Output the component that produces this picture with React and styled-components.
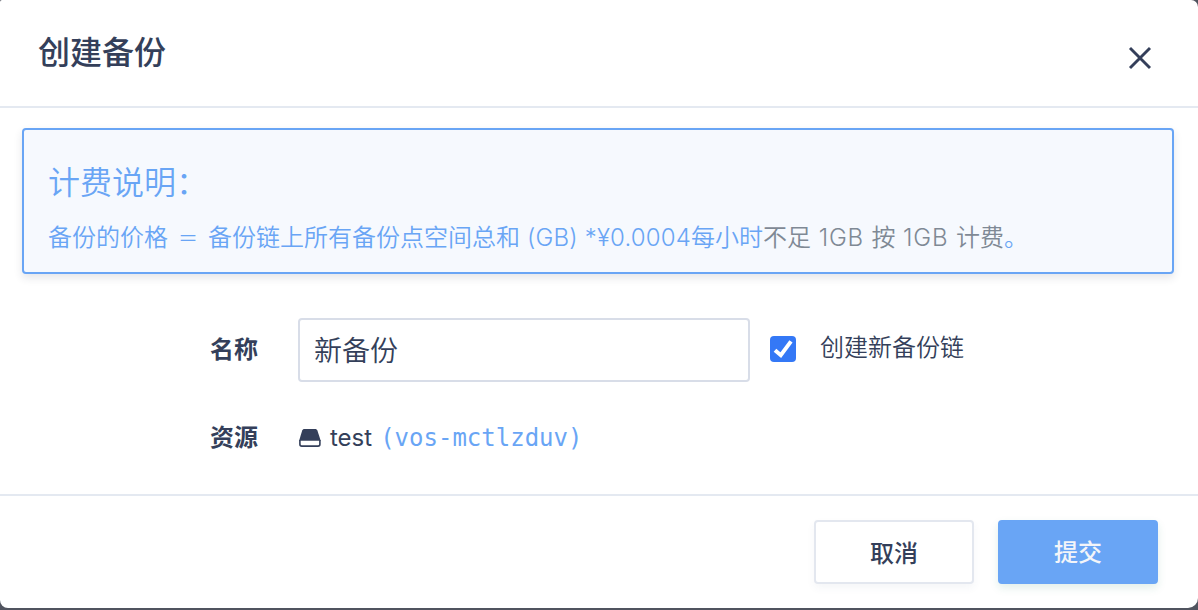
import React, { useState } from "react";
import styled, { createGlobalStyle } from "styled-components";

const GlobalStyle = createGlobalStyle`
  *, *::before, *::after { box-sizing: border-box; }
  body {
    margin: 0;
    background: #50545f;
    color: #343f5a;
    font-family: Inter, "Noto Sans CJK SC", sans-serif;
    font-size: 24px;
    overflow: hidden;
  }
  h2, h3, p { margin: 0; }
  button, input { font-family: inherit; }
`;

const Modal = styled.div`
  display: flex;
  flex-direction: column;
  width: 1198px;
  height: 608px;
  background: #fff;
  border-radius: 2px 7px 10px 8px;
  overflow: hidden;
`;

const Header = styled.header`
  display: flex;
  justify-content: space-between;
  height: 108px;
  padding: 29px 46px 0 38px;
  border-bottom: 2px solid #e4e9f1;
`;

const Title = styled.h2`
  font-size: 32px;
  line-height: 48px;
  font-weight: 500;
`;

const CloseButton = styled.button`
  width: 24px;
  height: 24px;
  margin-top: 17px;
  padding: 0;
  border: 0;
  background: none;
  color: #343f5a;
  svg { display: block; }
`;

const Body = styled.main`
  flex: 1;
  padding: 20px 24px 0 22px;
`;

const Notice = styled.section`
  height: 146px;
  padding: 29px 24px 0;
  border: 2px solid #69a5f5;
  border-radius: 4px;
  background: #f6f9fe;
  box-shadow: 0 4px 8px rgba(40, 50, 70, 0.12);
  color: #69a5f5;
  font-weight: 350;
`;

const NoticeTitle = styled.h3`
  font-size: 32px;
  line-height: 48px;
  font-weight: 350;
`;

const NoticeText = styled.p`
  margin-top: 13px;
  line-height: 36px;
  white-space: pre;
`;

const Equals = styled.span`
  display: inline-block;
  width: 40px;
  font-size: 20px;
  text-align: center;
`;

const Latin = styled.span`
  font-weight: 300;
  letter-spacing: ${(p) => p.$spacing}px;
`;

const Muted = styled.span`
  color: #7f8995;
`;

const Field = styled.div`
  display: flex;
  align-items: center;
  height: ${(p) => p.$height}px;
  margin-top: ${(p) => p.$gap}px;
  padding-left: 188px;
`;

const Label = styled.label`
  width: 88px;
  line-height: 36px;
  font-weight: 600;
`;

const TextInput = styled.input`
  width: 452px;
  height: 64px;
  padding: 0 14px 3px;
  border: 2px solid #d8dde8;
  border-radius: 4px;
  background: #fff;
  color: #343f5a;
  font-size: 28px;
  font-weight: 350;
  outline: 0;
`;

const Check = styled.label`
  display: flex;
  align-items: center;
  margin-left: 20px;
  padding-bottom: 2px;
  line-height: 26px;
  font-weight: 350;
`;

const CheckInput = styled.input`
  appearance: none;
  width: 0;
  height: 0;
  margin: 0;
`;

const CheckBox = styled.span`
  width: 26px;
  height: 26px;
  margin-right: 24px;
  border-radius: 4px;
  background: ${(p) => (p.$checked ? "#3478f6" : "#d8dde8")};
  svg { display: block; }
`;

const CheckText = styled.span`
  padding-bottom: 3px;
`;

const ResourceName = styled.span`
  margin: 0 8px;
  padding-bottom: 2px;
  font-weight: 400;
`;

const ResourceId = styled.span`
  color: #69a5f5;
  font-family: "DejaVu Sans Mono", monospace;
  font-size: 24px;
`;

const Footer = styled.footer`
  display: flex;
  justify-content: flex-end;
  gap: 24px;
  height: 114px;
  padding: 24px 40px 0;
  border-top: 2px solid #e4e9f1;
`;

const Button = styled.button`
  width: 160px;
  height: 64px;
  padding: 0 0 ${(p) => (p.$primary ? 4 : 2)}px;
  border: 2px solid ${(p) => (p.$primary ? "#69a5f5" : "#e3e7ef")};
  border-radius: 4px;
  background: ${(p) => (p.$primary ? "#69a5f5" : "#fff")};
  box-shadow: 0 4px 8px ${(p) => (p.$primary ? "rgba(30, 130, 95, 0.13)" : "rgba(60, 80, 120, 0.05)")};
  color: ${(p) => (p.$primary ? "#f3f5f9" : "#343f5a")};
  font-size: 24px;
  font-weight: 500;
`;

export default function App() {
  const [name, setName] = useState("新备份");
  const [newChain, setNewChain] = useState(true);

  return (
    <>
      <GlobalStyle />
      <Modal role="dialog" lang="zh-CN">
        <Header>
          <Title>创建备份</Title>
          <CloseButton aria-label="关闭">
            <svg width="24" height="24" viewBox="0 0 24 24" fill="none" stroke="currentColor" strokeWidth="2.9">
              <path d="M2 2l20 20M22 2L2 22" />
            </svg>
          </CloseButton>
        </Header>
        <Body>
          <Notice>
            <NoticeTitle>计费说明：</NoticeTitle>
            <NoticeText>
              备份的价格<Equals>＝</Equals>备份链上所有备份点空间总和
              <Latin $spacing={0.18}>{" (GB) *¥0.0004"}</Latin>每小时
              <Muted>
                不足<Latin $spacing={0.8}>{" 1GB "}</Latin>按<Latin $spacing={0.8}>{" 1GB "}</Latin>计费
              </Muted>。
            </NoticeText>
          </Notice>
          <Field $height={64} $gap={44}>
            <Label htmlFor="backup-name">名称</Label>
            <TextInput id="backup-name" value={name} onChange={(e) => setName(e.target.value)} />
            <Check>
              <CheckInput type="checkbox" checked={newChain} onChange={(e) => setNewChain(e.target.checked)} />
              <CheckBox $checked={newChain}>
                {newChain && (
                  <svg width="26" height="26" viewBox="0 0 26 26" fill="none" stroke="#fff" strokeWidth="4">
                    <path d="M5 14.200L10.800 19.200L21 5.400" />
                  </svg>
                )}
              </CheckBox>
              <CheckText>创建新备份链</CheckText>
            </Check>
          </Field>
          <Field $height={36} $gap={38}>
            <Label as="span">资源</Label>
            <svg width="24" height="20" viewBox="0 0 24 20" fill="currentColor">
              <path d="M6.500 1h10.600c1.200 0 2 .6 2.300 1.500L22.700 12.800H1.100L4.200 2.500C4.500 1.600 5.300 1 6.500 1z" />
              <path d="M1.900 12v4.200c0 1.200.7 1.900 1.900 1.900h16.200c1.200 0 1.900-.7 1.900-1.900V12" fill="none" stroke="currentColor" strokeWidth="1.600" />
            </svg>
            <ResourceName>test</ResourceName>
            <ResourceId>(vos-mctlzduv)</ResourceId>
          </Field>
        </Body>
        <Footer>
          <Button>取消</Button>
          <Button $primary>提交</Button>
        </Footer>
      </Modal>
    </>
  );
}
